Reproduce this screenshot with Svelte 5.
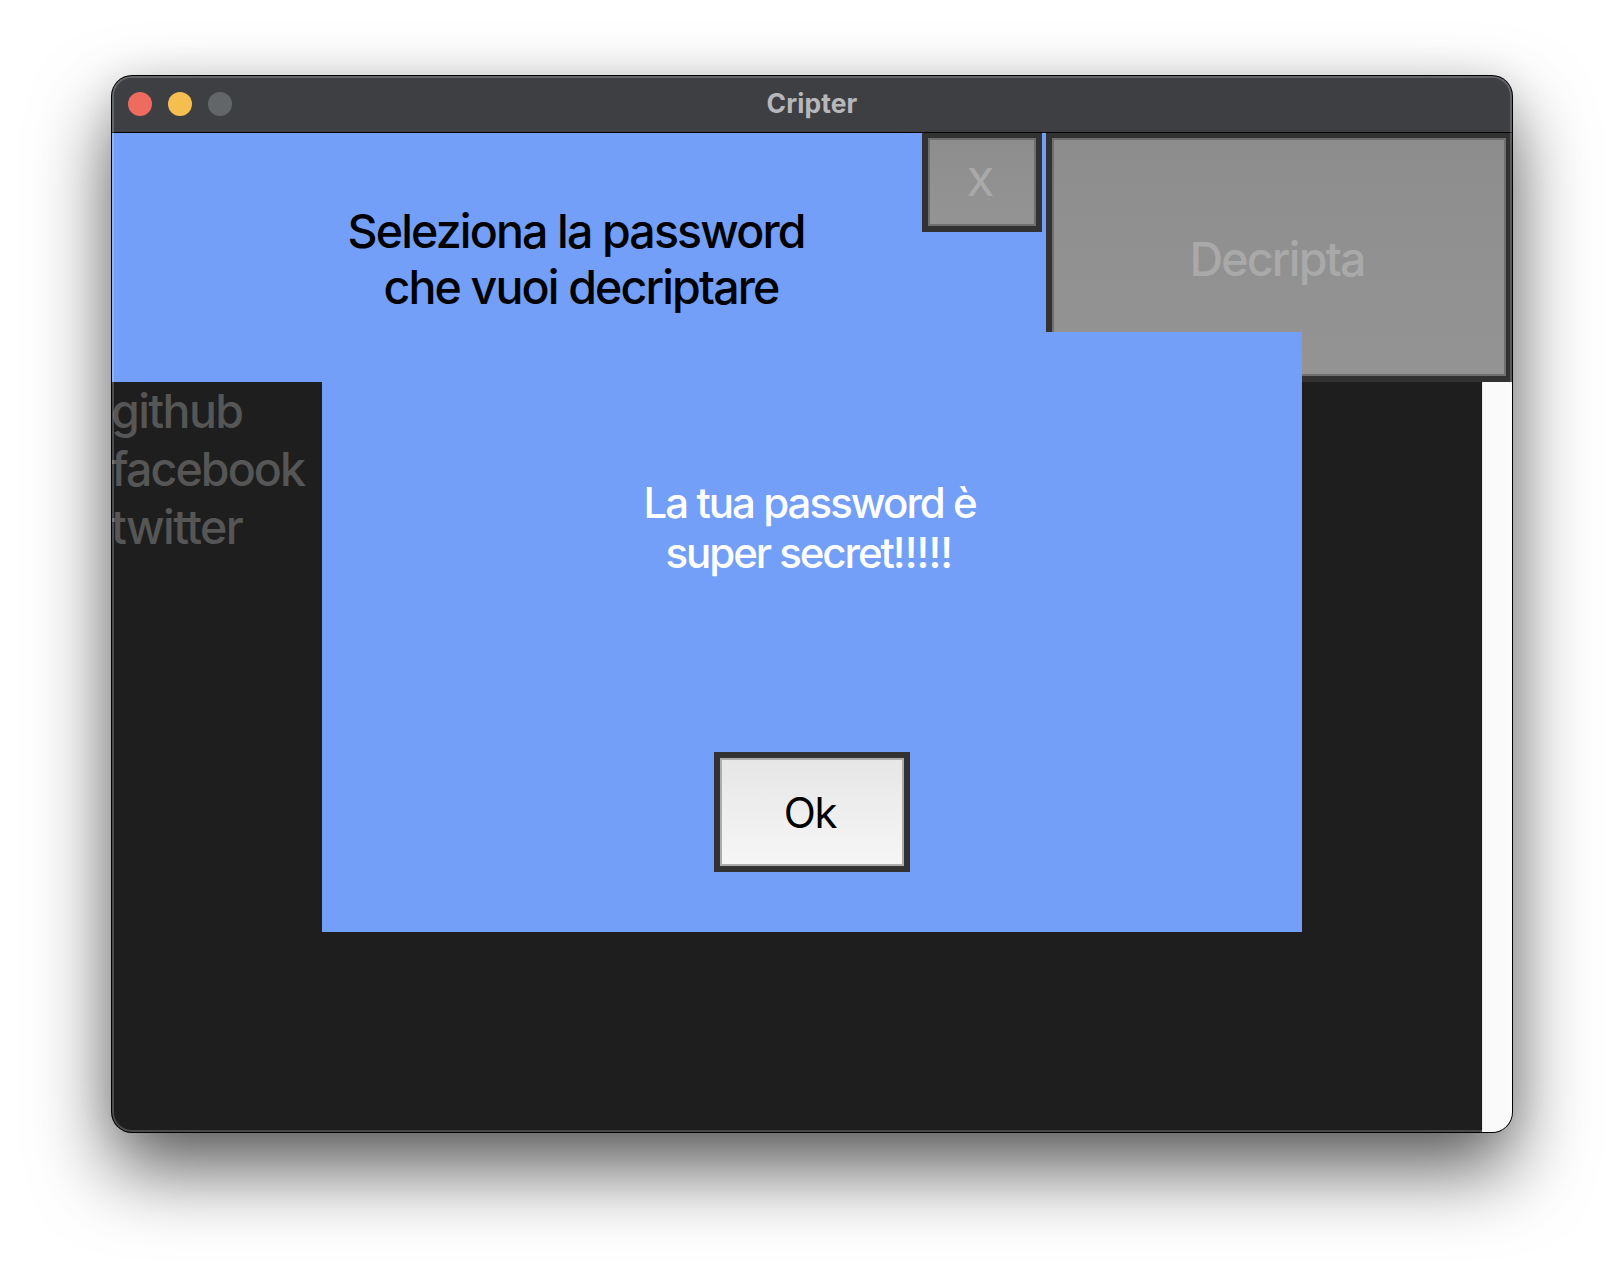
<script lang="ts">
  const entries = ['github', 'facebook', 'twitter'];
</script>

<main class="desktop">
  <section class="window">
    <header class="titlebar">
      <div class="lights">
        <span class="light close"></span>
        <span class="light minimize"></span>
        <span class="light zoom"></span>
      </div>
      <h1>Cripter</h1>
    </header>

    <div class="toolbar">
      <p class="prompt">
        <span class="p1">Seleziona la password</span>
        <span class="p2">che vuoi decriptare</span>
      </p>
      <button class="btn dim x" disabled><span>X</span></button>
      <button class="btn dim decrypt" disabled><span>Decripta</span></button>
    </div>

    <div class="body">
      <ul class="list">
        {#each entries as entry}
          <li class={entry}>{entry}</li>
        {/each}
      </ul>
      <div class="scrollbar"></div>
    </div>

    <div class="dialog">
      <p class="message">
        <span class="m1">La tua password è</span>
        <span class="m2">super secret<b>!!!!!</b></span>
      </p>
      <button class="btn ok"><span>Ok</span></button>
    </div>
  </section>
</main>

<style>
  :global(body) {
    background: #fff;
  }
  .desktop {
    box-sizing: border-box;
    width: 1624px;
    height: 1280px;
    padding: 76px 112px 0;
    overflow: hidden;
    font-family: Inter, 'Liberation Sans', sans-serif;
    font-weight: 450;
  }
  .window {
    position: relative;
    width: 1400px;
    height: 1056px;
    border-radius: 20px;
    overflow: hidden;
    background: #1e1e1e;
    box-shadow: 0 0 0 1px #000, 0 0 36px rgba(0, 0, 0, 0.08), 0 37px 78px rgba(0, 0, 0, 0.64);
  }
  .window::after {
    content: '';
    position: absolute;
    inset: 0;
    border-radius: 20px;
    box-shadow: inset 0 0 0 2px rgba(255, 255, 255, 0.2);
    pointer-events: none;
  }
  .titlebar {
    box-sizing: border-box;
    height: 57px;
    display: grid;
    grid-template-columns: 1fr auto 1fr;
    align-items: center;
    padding: 0 16px 0;
    background: #3e3f43;
    border-bottom: 1px solid #000;
  }
  .lights {
    display: flex;
    gap: 16px;
  }
  .light {
    width: 24px;
    height: 24px;
    border-radius: 50%;
  }
  .close { background: #ed6b5f; }
  .minimize { background: #f5bf4f; }
  .zoom { background: #636669; }
  h1 {
    margin: 0;
    padding-bottom: 2px;
    font-size: 26.4px;
    line-height: 30px;
    font-weight: 700;
    letter-spacing: 0.1px;
    color: #b7b7ba;
  }
  .toolbar {
    height: 249px;
    display: flex;
    align-items: flex-start;
    background: #739ff8;
  }
  .prompt {
    width: 810px;
    margin: 0;
    padding-top: 70px;
    font-size: 46.5px;
    line-height: 56px;
  }
  .prompt span {
    display: block;
    white-space: nowrap;
    color: #000;
  }
  .p1 { padding-left: 235.5px; letter-spacing: -1.86px; }
  .p2 { padding-left: 271.5px; letter-spacing: -1.86px; }
  .btn {
    box-sizing: border-box;
    display: flex;
    align-items: center;
    justify-content: center;
    padding: 0;
    border: 6px solid #323232;
    border-radius: 0;
    background: linear-gradient(#e6e6e6, #f6f6f6);
    box-shadow: inset 0 0 0 2px #acacac;
    font-family: inherit;
    font-weight: inherit;
    color: #000;
  }
  .dim {
    background: linear-gradient(#8d8d8d, #949494);
    box-shadow: inset 0 0 0 2px #6f6f6f;
    border-top-width: 5px;
    color: #a9a9a9;
  }
  .x {
    width: 120px;
    height: 99px;
    margin-right: 4px;
    font-size: 38.5px;
    line-height: 46px;
  }
  .x span {
    padding-right: 3px;
  }
  .decrypt {
    width: 466px;
    height: 249px;
    font-size: 46.5px;
    line-height: 56px;
  }
  .decrypt span {
    padding: 4px 4px 0 0;
    letter-spacing: -1.75px;
  }
  .body {
    display: flex;
    height: 750px;
  }
  .list {
    flex: 1;
    margin: 0;
    padding: 0;
    list-style: none;
    font-size: 46.5px;
    line-height: 58px;
    text-indent: -1px;
    color: #565656;
  }
  .github { letter-spacing: -1.6px; }
  .facebook { letter-spacing: -1.9px; }
  .twitter { letter-spacing: -1.55px; }
  .scrollbar {
    box-sizing: border-box;
    width: 30px;
    background: #fafafa;
    border-left: 1px solid #e9e9e9;
  }
  .dialog {
    position: absolute;
    left: 210px;
    top: 256px;
    box-sizing: border-box;
    width: 980px;
    height: 600px;
    padding: 146px 0 60px;
    display: flex;
    flex-direction: column;
    align-items: center;
    justify-content: space-between;
    background: #739ff8;
  }
  .message {
    width: 100%;
    margin: 0;
    font-size: 42px;
    line-height: 50px;
    color: #fff;
  }
  .message span {
    display: block;
    white-space: nowrap;
  }
  .message b {
    font-weight: inherit;
    letter-spacing: -0.9px;
  }
  .m1 { padding-left: 321.5px; letter-spacing: -1.96px; }
  .m2 { padding-left: 343.5px; letter-spacing: -2.05px; }
  .ok {
    width: 196px;
    height: 120px;
    font-size: 42px;
    line-height: 50px;
    font-weight: 400;
  }
  .ok span {
    padding: 2px 4px 0 0;
    letter-spacing: -1.3px;
  }
</style>
